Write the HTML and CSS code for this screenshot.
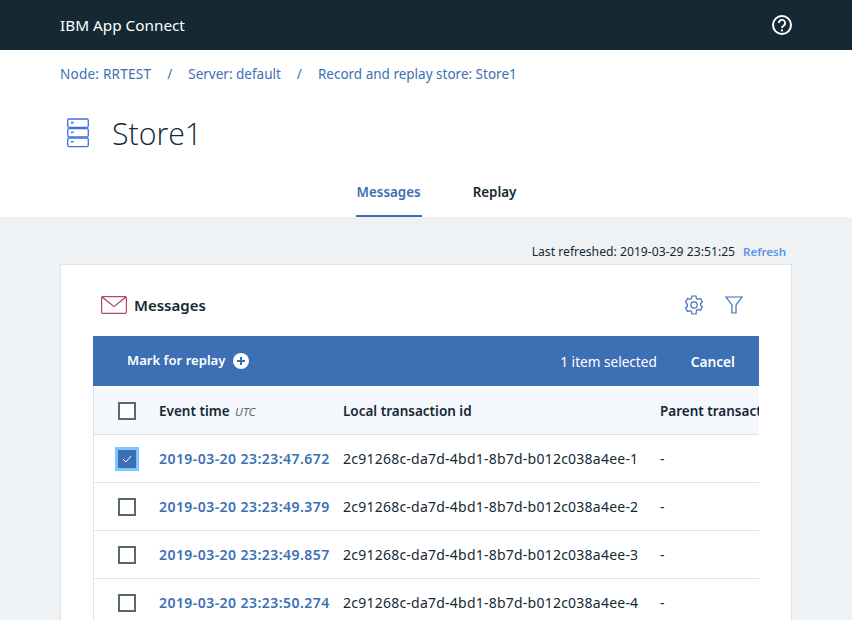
FILE: index.html
```html
<!DOCTYPE html>
<html lang="en">
<head>
<meta charset="utf-8">
<title>Store1</title>
<link rel="stylesheet" href="styles.css">
</head>
<body>
<header class="topbar">
  <span class="brand">IBM App Connect</span>
  <svg class="help" width="20" height="20" viewBox="0 0 20 20" fill="none" stroke="#fff" stroke-width="2"><circle cx="10" cy="10" r="9"/><path d="M6.9 8a3.1 3.1 0 1 1 4.6 2.7c-1 .6-1.5 1.1-1.5 2.3" stroke-width="1.8"/><circle cx="10" cy="15.4" r="1.1" fill="#fff" stroke="none"/></svg>
</header>
<section class="head">
  <nav class="crumbs"><a class="crumb-node">Node: RRTEST</a><span class="sep">/</span><a>Server: default</a><span class="sep">/</span><a>Record and replay store: Store1</a></nav>
  <div class="title">
    <svg class="store" width="22" height="30" viewBox="0 0 22 30" fill="none" stroke="#3d70e0" stroke-width="1.3"><rect x=".7" y="1" width="20.6" height="8.4" rx="1.4"/><rect x=".7" y="10.6" width="20.6" height="8.4" rx="1.4"/><rect x=".7" y="20.2" width="20.6" height="8.4" rx="1.4"/><path d="M4 4.6h2.6M4 14.2h2.6M4 23.8h2.6" stroke-width="1.6"/></svg>
    <h1>Store1</h1>
  </div>
  <div class="tabs"><a class="tab active">Messages</a><a class="tab">Replay</a></div>
</section>
<main class="content">
  <p class="refresh"><span>Last refreshed: 2019-03-29 23:51:25</span><a>Refresh</a></p>
  <section class="card">
    <div class="card-head">
      <svg width="26" height="18" viewBox="0 0 26 18" fill="none" stroke="#a6365f" stroke-width="1.2"><rect x=".6" y=".6" width="24.8" height="16.8" rx="1.2" stroke="#b0476e"/><path d="M1 1l12 9.6L25 1"/></svg>
      <h2>Messages</h2>
      <svg class="gear" width="18" height="20" viewBox="0 0 18 20" fill="none" stroke="#3d6fb4" stroke-width="1.2"><path d="M7 1h4l.5 2.4 1.6.9 2.3-.8 2 3.4-1.8 1.6v1.8l1.8 1.6-2 3.4-2.3-.8-1.6.9L11 19H7l-.5-2.4-1.6-.9-2.3.8-2-3.400 1.800-1.600V9.700L.6 6.900l2-3.400 2.300.8 1.600-.9z"/><circle cx="9" cy="10" r="3.200"/></svg>
      <svg class="funnel" width="18" height="18" viewBox="0 0 18 18" fill="none" stroke="#3d6fb4" stroke-width="1.200"><path d="M1 1h16l-6 8v8H7V9z"/></svg>
    </div>
    <div class="panel">
      <div class="action-bar">
        <span class="mark">Mark for replay</span>
        <svg class="plus" width="16" height="16" viewBox="0 0 16 16"><circle cx="8" cy="8" r="8" fill="#fff"/><path d="M8 4v8M4 8h8" stroke="#3d6fb4" stroke-width="2"/></svg>
        <span class="count">1 item selected</span>
        <span class="cancel">Cancel</span>
      </div>
      <div class="row row-head">
        <span class="box"></span>
        <span class="c-time">Event time <i>UTC</i></span>
        <span class="c-id">Local transaction id</span>
        <span class="c-parent">Parent transaction id</span>
      </div>
      <div class="row">
        <span class="box checked"><svg width="10" height="8" viewBox="0 0 10 8" fill="none" stroke="#fff" stroke-width="1"><path d="M1 4l3 3 5-6"/></svg></span>
        <a class="c-time">2019-03-20 23:23:47.672</a>
        <span class="c-id">2c91268c-da7d-4bd1-8b7d-b012c038a4ee-1</span>
        <span class="c-parent">-</span>
      </div>
      <div class="row">
        <span class="box"></span>
        <a class="c-time">2019-03-20 23:23:49.379</a>
        <span class="c-id">2c91268c-da7d-4bd1-8b7d-b012c038a4ee-2</span>
        <span class="c-parent">-</span>
      </div>
      <div class="row">
        <span class="box"></span>
        <a class="c-time">2019-03-20 23:23:49.857</a>
        <span class="c-id">2c91268c-da7d-4bd1-8b7d-b012c038a4ee-3</span>
        <span class="c-parent">-</span>
      </div>
      <div class="row">
        <span class="box"></span>
        <a class="c-time">2019-03-20 23:23:50.274</a>
        <span class="c-id">2c91268c-da7d-4bd1-8b7d-b012c038a4ee-4</span>
        <span class="c-parent">-</span>
      </div>
    </div>
  </section>
</main>
</body>
</html>
```
FILE: styles.css
```css
* { box-sizing: border-box; }
html, body { height: 620px; overflow: hidden; }
body { margin: 0; background: #eff2f5; font-family: "Noto Sans", sans-serif; font-size: 14px; color: #152934; }
.topbar { height: 50px; background: #152934; display: flex; align-items: center; justify-content: space-between; padding: 0 60px; }
.brand { color: #fff; font-size: 15.3px; }
.head { background: #fff; height: 167px; padding: 14px 60px 0; display: flex; flex-direction: column; }
.crumbs { display: flex; height: 20px; align-items: center; color: #3d6fb4; font-size: 13.5px; }
.crumb-node { letter-spacing: .25px; }
.sep { margin: 0 16px; color: #3d6fb4; }
.title { display: flex; align-items: center; margin-top: 30px; height: 38px; padding-left: 7px; }
.title h1 { margin: 0 0 0 23px; font-weight: 300; font-size: 30.3px; font-family: "Open Sans", sans-serif; }
.tabs { display: flex; justify-content: center; gap: 50px; margin-top: 21px; padding-left: 21px; }
.tab { height: 44px; padding: 10px 1px 0; font-weight: 600; font-size: 13.4px; }
.tab.active { color: #3d6fb4; border-bottom: 2px solid #3d6fb4; }
.content { padding: 0 60px; }
.refresh { margin: 24px 6px 3px 0; height: 20px; display: flex; justify-content: flex-end; align-items: center; gap: 8px; font-size: 12.2px; }
.refresh a { color: #5596e6; font-weight: 600; font-size: 11.5px; }
.card { background: #fff; border: 1px solid #dfe3e6; height: 400px; padding: 0 32px; }
.card-head { height: 71px; display: flex; align-items: center; padding: 9px 7px 0 8px; }
.card-head h2 { margin: 0 0 0 7px; font-size: 15px; font-weight: 600; }
.gear { margin-left: auto; }
.funnel { margin-left: 22px; margin-right: 9px; }
.panel { overflow: hidden; }
.action-bar { height: 50px; background: #3d6fb4; color: #fff; display: flex; align-items: center; padding: 0 24px 0 34px; }
.mark { font-weight: 600; font-size: 13.1px; margin-top: -2px; }
.plus { margin-left: 8px; }
.count { margin-left: auto; font-size: 13.6px; }
.cancel { margin-left: 34px; font-weight: 600; font-size: 13.7px; }
.row { display: flex; align-items: center; height: 48px; border-bottom: 1px solid #dfe3e6; border-left: 1px solid #dfe3e6; white-space: nowrap; width: 800px; font-size: 14px; }
.row-head { height: 49px; background: #f4f7fb; font-weight: 600; font-size: 13.5px; border-top: 1px solid #fff; }
.box { flex: none; width: 18px; height: 18px; border: 2px solid #5a6872; background: #fff; margin-left: 24px; display: flex; align-items: center; justify-content: center; }
.box.checked { background: #3d6fb4; border: 0; outline: 3px solid #7cc7ff; }
.c-time { flex: none; width: 184px; margin-left: 23px; }
a.c-time { color: #3d6fb4; font-weight: 600; letter-spacing: .45px; }
.c-time i { font-weight: 400; font-size: 11.5px; color: #5a6872; margin-left: 2px; }
.c-id { flex: none; width: 317px; }
.row:not(.row-head) .c-id { letter-spacing: .23px; }
```
